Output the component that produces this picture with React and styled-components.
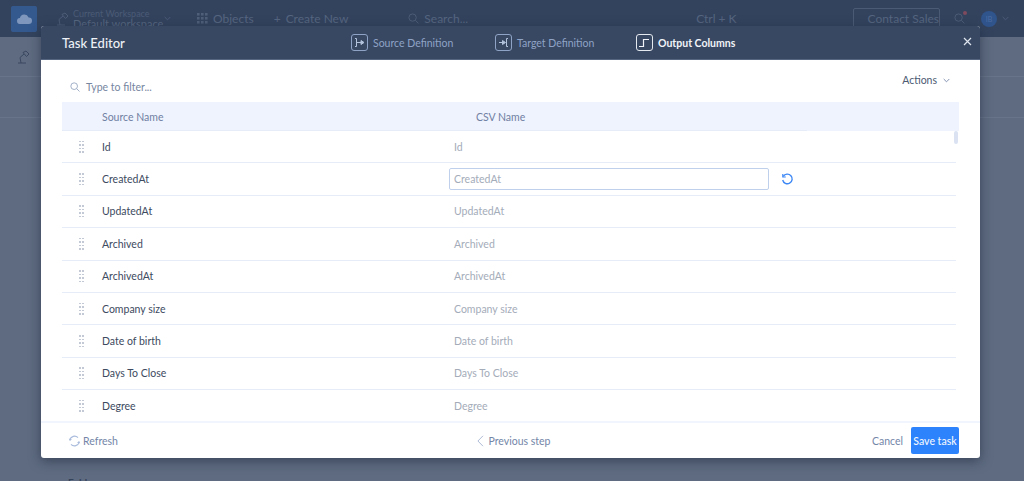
import React from "react";
import styled, { createGlobalStyle } from "styled-components";

const COLUMNS = [
  "Id",
  "CreatedAt",
  "UpdatedAt",
  "Archived",
  "ArchivedAt",
  "Company size",
  "Date of birth",
  "Days To Close",
  "Degree"
];

const GlobalStyle = createGlobalStyle`
  html, body {
    margin: 0;
    height: 100%;
    overflow: hidden;
    background: #5e6b80;
    font-family: Lato, "Open Sans", sans-serif;
  }
  * { box-sizing: border-box; }
`;

const Page = styled.div`
  position: relative;
  width: 1024px;
  height: 481px;
  overflow: hidden;
  background: #5e6b80;
`;

const TopBar = styled.div`
  height: 37px;
  display: flex;
  align-items: center;
  padding-left: 11px;
  background: #33435e;
  color: #566680;
  font-size: 12px;
`;

const LogoBox = styled.div`
  width: 26px;
  height: 26px;
  margin-right: 19px;
  border-radius: 2px;
  background: #34598f;
  display: flex;
  align-items: center;
  justify-content: center;
`;

const Workspace = styled.div`
  display: flex;
  flex-direction: column;
  width: 91px;
  margin-left: 4px;
  line-height: 10px;
  font-size: 11px;
  small {
    font-size: 9px;
    color: #4b5b76;
  }
`;

const TopItem = styled.div`
  display: flex;
  align-items: center;
  gap: 5px;
  margin-left: ${p => p.$left || 0}px;
`;

const ContactBox = styled.div`
  display: flex;
  align-items: center;
  gap: 7px;
  width: 87px;
  height: 22px;
  margin-left: 13px;
  padding-left: 6px;
  border: 1px solid #4c5b75;
  border-radius: 2px;
  white-space: nowrap;
`;

const Avatar = styled.div`
  width: 16px;
  height: 16px;
  margin-left: 16px;
  border-radius: 50%;
  background: #30548c;
  color: #4d6ea3;
  font-size: 7px;
  line-height: 16px;
  text-align: center;
`;

const HelpDot = styled.span`
  position: relative;
  margin-left: 14px;
  display: flex;
  &::after {
    content: "";
    position: absolute;
    top: -2px;
    right: -2px;
    width: 4px;
    height: 4px;
    border-radius: 50%;
    background: #7f4a5e;
  }
`;

const BackRow = styled.div`
  height: ${p => p.$height}px;
  display: flex;
  align-items: center;
  justify-content: space-between;
  padding: 0 ${p => p.$right}px 0 ${p => p.$left}px;
  border-bottom: 1px solid #687489;
`;

const FolderLabel = styled.div`
  padding: 358px 0 0 68px;
  color: #34425a;
  font-size: 10px;
  font-weight: 700;
`;

const Modal = styled.div`
  position: absolute;
  left: 41px;
  top: 26px;
  width: 939px;
  height: 432px;
  display: flex;
  flex-direction: column;
  background: #fff;
  border-radius: 3px;
  box-shadow: 0 3px 12px rgba(25, 35, 55, 0.55);
  overflow: hidden;
`;

const ModalHeader = styled.div`
  position: relative;
  flex: 0 0 34px;
  display: flex;
  align-items: center;
  padding-left: 21px;
  background: #384862;
  border-bottom: 1px solid #566580;
`;

const Title = styled.div`
  width: 289px;
  color: #eef1f6;
  font-size: 13px;
  font-weight: 500;
`;

const Step = styled.div`
  display: flex;
  align-items: center;
  gap: 5px;
  width: ${p => p.$width}px;
  color: ${p => (p.$active ? "#f1f4f8" : "#8fa3c6")};
  font-size: 10.5px;
  font-weight: ${p => (p.$active ? 700 : 400)};
  white-space: nowrap;
`;

const StepIcon = styled.span`
  width: 17px;
  height: 17px;
  flex: none;
  display: flex;
  align-items: center;
  justify-content: center;
  border: 1px solid ${p => (p.$active ? "#e4e8ef" : "#8fa3c6")};
  border-radius: 3px;
`;

const CloseButton = styled.button`
  position: absolute;
  right: 8px;
  top: 11px;
  display: flex;
  padding: 0;
  border: 0;
  background: none;
`;

const Body = styled.div`
  flex: 1;
  min-height: 0;
  padding: 0 21px;
  overflow: hidden;
`;

const FilterRow = styled.div`
  height: 42px;
  display: flex;
  align-items: center;
  justify-content: space-between;
  padding: 0 9px 0 8px;
`;

const Filter = styled.div`
  display: flex;
  align-items: center;
  gap: 6px;
  padding-top: 11px;
  color: #77869f;
  font-size: 10.5px;
`;

const Actions = styled.div`
  display: flex;
  align-items: center;
  gap: 6px;
  padding-bottom: 2px;
  color: #4b5a72;
  font-size: 10.5px;
`;

const TableHead = styled.div`
  position: relative;
  height: 29px;
  display: grid;
  grid-template-columns: 374px 1fr;
  align-items: center;
  padding-left: 40px;
  background: #eff3fd;
  color: #6f80a3;
  font-size: 10.5px;
  &::after {
    content: "";
    position: absolute;
    left: 0;
    bottom: 0;
    width: 745px;
    height: 1px;
    background: #e6ecf8;
  }
`;

const Rows = styled.div`
  position: relative;
`;

const Scrollbar = styled.div`
  position: absolute;
  right: 1px;
  top: 0;
  width: 4px;
  height: 13px;
  border-radius: 2px;
  background: #dbe3f2;
`;

const Row = styled.div`
  height: 32.4px;
  display: grid;
  grid-template-columns: 40px 347px 320px 1fr;
  align-items: center;
  margin-right: 3px;
  border-bottom: 1px solid #e6edf8;
`;

const Grip = styled.span`
  display: grid;
  grid-template-columns: 2px 2px;
  gap: 2px 1px;
  margin-left: 17px;
  i {
    width: 2px;
    height: 1.5px;
    background: #c3cad6;
  }
`;

const SourceName = styled.div`
  color: #3d4a60;
  font-size: 10.5px;
`;

const CsvName = styled.div`
  padding-left: 5px;
  color: #a4acb9;
  font-size: 10.5px;
`;

const CsvInput = styled.div`
  height: 22px;
  padding-left: 4px;
  border: 1px solid #bfd0ec;
  border-radius: 2px;
  color: #a4acb9;
  font-size: 10.5px;
  line-height: 20px;
`;

const ResetIcon = styled.span`
  display: flex;
  margin-left: 12px;
`;

const Footer = styled.div`
  flex: 0 0 37px;
  display: grid;
  grid-template-columns: 1fr 1fr 1fr;
  align-items: center;
  padding: 0 21px 0 27px;
  border-top: 2px solid #f1f5fd;
  font-size: 10.5px;
  color: #7486a8;
`;

const FooterLink = styled.div`
  display: flex;
  align-items: center;
  gap: ${p => p.$gap}px;
  justify-content: ${p => p.$justify || "flex-start"};
`;

const FooterEnd = styled.div`
  display: flex;
  align-items: center;
  justify-content: flex-end;
  gap: 8px;
`;

const SaveButton = styled.button`
  width: 48px;
  height: 27px;
  padding: 0;
  border: 0;
  border-radius: 2px;
  background: #2d83fb;
  color: #f2f7ff;
  font: 500 10.5px Lato, sans-serif;
`;

const Spacer = styled.div`
  flex: 1;
`;

const Cloud = () => (
  <svg width="15" height="10" viewBox="0 0 15 10" fill="#7f97bd">
    <path d="M3.2 10A3 3 0 0 1 2.9 4 4.6 4.6 0 0 1 11.6 3.4 3.3 3.3 0 0 1 11.8 10Z" />
  </svg>
);

const Lamp = ({ color }) => (
  <svg width="13" height="14" viewBox="0 0 13 14" fill="none" stroke={color} strokeWidth="0.9">
    <path d="M1 13h8M4 13 3 7.5 7 4M6 2.5 9 1l3 3-2.5 2.5Z" />
  </svg>
);

const Grid = () => (
  <svg width="11" height="11" viewBox="0 0 11 11" fill="#4f5f7a">
    {[0, 4, 8].map(y =>
      [0, 4, 8].map(x => <rect key={`${x}-${y}`} x={x} y={y} width="2.6" height="2.6" />)
    )}
  </svg>
);

const Search = ({ color, size }) => (
  <svg width={size} height={size} viewBox="0 0 12 12" fill="none" stroke={color} strokeWidth="1">
    <circle cx="5" cy="5" r="4" />
    <path d="m8 8 3.4 3.4" />
  </svg>
);

const Chevron = ({ color }) => (
  <svg width="7" height="5" viewBox="0 0 7 5" fill="none" stroke={color} strokeWidth="0.9">
    <path d="m.7 1 2.8 2.8L6.3 1" />
  </svg>
);

const SourceIcon = () => (
  <svg width="11" height="9" viewBox="0 0 11 9" fill="none" stroke="#b4c3dc" strokeWidth="1">
    <path d="M1 .5h1.5v8H1M2.500 4.500h6" />
    <path d="M7 2.500 10 4.500 7 6.500Z" fill="#b4c3dc" />
  </svg>
);

const TargetIcon = () => (
  <svg width="11" height="9" viewBox="0 0 11 9" fill="none" stroke="#b4c3dc" strokeWidth="1">
    <path d="M10 .5H8.500v8H10M1 4.500h5" />
    <path d="M4.500 2.500 7.500 4.500 4.500 6.500Z" fill="#b4c3dc" />
  </svg>
);

const OutputIcon = () => (
  <svg width="11" height="10" viewBox="0 0 11 10" fill="none" stroke="#f1f4f8" strokeWidth="1.2">
    <path d="M0 8.500h4.500v-7H10" />
  </svg>
);

const Reset = () => (
  <svg width="13" height="13" viewBox="0 0 13 13" fill="none" stroke="#3d88f5" strokeWidth="1.4">
    <path d="M2.300 3.400A4.800 4.800 0 1 1 1.700 7" />
    <path d="M1.800 1v3h3" strokeWidth="1.200" />
  </svg>
);

const Refresh = () => (
  <svg width="13" height="12" viewBox="0 0 13 12" fill="none" stroke="#a9bbdc" strokeWidth="1.1">
    <path d="M1.800 5A4.800 4.800 0 0 1 10 2.700M11.200 7A4.800 4.800 0 0 1 3 9.300" />
    <path d="M.8 3.500 1.800 6 4 4.500M12.200 8.500 11.200 6 9 7.500" fill="#a9bbdc" stroke="none" />
  </svg>
);

const Back = () => (
  <svg width="7" height="12" viewBox="0 0 7 12" fill="none" stroke="#aebcd6" strokeWidth="1">
    <path d="M6 .8.900 6 6 11.200" />
  </svg>
);

const Close = () => (
  <svg width="9" height="9" viewBox="0 0 9 9" stroke="#dfe5ee" strokeWidth="1.200">
    <path d="m1 1 7 7M8 1 1 8" />
  </svg>
);

const Background = () => (
  <>
    <TopBar>
      <LogoBox>
        <Cloud />
      </LogoBox>
      <Lamp color="#4f5f7a" />
      <Workspace>
        <small>Current Workspace</small>
        Default workspace
      </Workspace>
      <Chevron color="#4f5f7a" />
      <TopItem $left={26}>
        <Grid />
        Objects
      </TopItem>
      <TopItem $left={20}>
        <span>+</span>
        Create New
      </TopItem>
      <TopItem $left={60}>
        <Search color="#4f5f7a" size={11} />
        Search...
      </TopItem>
      <TopItem $left={228}>Ctrl + K</TopItem>
      <Spacer />
      <ContactBox>
        <Lamp color="#4f5f7a" />
        Contact Sales
      </ContactBox>
      <HelpDot>
        <Search color="#4f5f7a" size={11} />
      </HelpDot>
      <Avatar>IB</Avatar>
      <TopItem $left={5} style={{ marginRight: 15 }}>
        <Chevron color="#4f5f7a" />
      </TopItem>
    </TopBar>
    <BackRow $height={40} $left={17} $right={25}>
      <Lamp color="#35435c" />
    </BackRow>
    <BackRow $height={41} $left={29} $right={32} />
    <FolderLabel>Folder</FolderLabel>
  </>
);

const App = () => (
  <Page>
    <GlobalStyle />
    <Background />
    <Modal>
      <ModalHeader>
        <Title>Task Editor</Title>
        <Step $width={144}>
          <StepIcon>
            <SourceIcon />
          </StepIcon>
          Source Definition
        </Step>
        <Step $width={141}>
          <StepIcon>
            <TargetIcon />
          </StepIcon>
          Target Definition
        </Step>
        <Step $active $width={120}>
          <StepIcon $active>
            <OutputIcon />
          </StepIcon>
          Output Columns
        </Step>
        <CloseButton>
          <Close />
        </CloseButton>
      </ModalHeader>
      <Body>
        <FilterRow>
          <Filter>
            <Search color="#8fa0bc" size={10} />
            Type to filter...
          </Filter>
          <Actions>
            Actions
            <Chevron color="#7486a8" />
          </Actions>
        </FilterRow>
        <TableHead>
          <div>Source Name</div>
          <div>CSV Name</div>
        </TableHead>
        <Rows>
          <Scrollbar />
          {COLUMNS.map(name => (
            <Row key={name}>
              <Grip>
                {[0, 1, 2, 3, 4, 5, 6, 7].map(i => (
                  <i key={i} />
                ))}
              </Grip>
              <SourceName>{name}</SourceName>
              {name === "CreatedAt" ? (
                <CsvInput>{name}</CsvInput>
              ) : (
                <CsvName>{name}</CsvName>
              )}
              {name === "CreatedAt" && (
                <ResetIcon>
                  <Reset />
                </ResetIcon>
              )}
            </Row>
          ))}
        </Rows>
      </Body>
      <Footer>
        <FooterLink $gap={2}>
          <Refresh />
          Refresh
        </FooterLink>
        <FooterLink $gap={5} $justify="center">
          <Back />
          Previous step
        </FooterLink>
        <FooterEnd>
          Cancel
          <SaveButton>Save task</SaveButton>
        </FooterEnd>
      </Footer>
    </Modal>
  </Page>
);

export default App;
